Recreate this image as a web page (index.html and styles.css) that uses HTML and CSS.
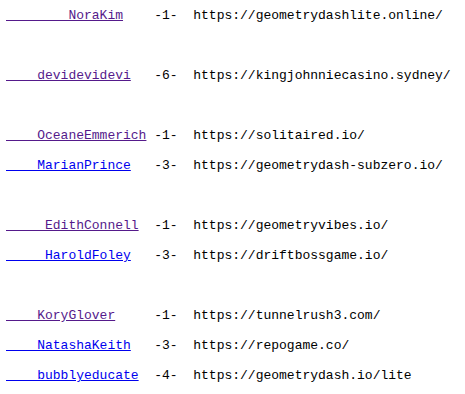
FILE: index.html
```html
<!DOCTYPE html>
<html>
<head>
<meta charset="utf-8">
<link rel="stylesheet" href="styles.css">
</head>
<body>
<div class="list">
  <div class="group">
    <div class="row"><span class="name"><a class="link visited" href="#">        NoraKim</a></span><span class="rest">-1-  https://geometrydashlite.online/</span></div>
  </div>
  <div class="group">
    <div class="row"><span class="name"><a class="link visited" href="#">    devidevidevi</a></span><span class="rest">-6-  https://kingjohnniecasino.sydney/</span></div>
  </div>
  <div class="group">
    <div class="row"><span class="name"><a class="link visited" href="#">    OceaneEmmerich</a></span><span class="rest">-1-  https://solitaired.io/</span></div>
    <div class="row"><span class="name"><a class="link" href="#">    MarianPrince</a></span><span class="rest">-3-  https://geometrydash-subzero.io/</span></div>
  </div>
  <div class="group">
    <div class="row"><span class="name"><a class="link visited" href="#">     EdithConnell</a></span><span class="rest">-1-  https://geometryvibes.io/</span></div>
    <div class="row"><span class="name"><a class="link" href="#">     HaroldFoley</a></span><span class="rest">-3-  https://driftbossgame.io/</span></div>
  </div>
  <div class="group">
    <div class="row"><span class="name"><a class="link visited" href="#">    KoryGlover</a></span><span class="rest">-1-  https://tunnelrush3.com/</span></div>
    <div class="row"><span class="name"><a class="link" href="#">    NatashaKeith</a></span><span class="rest">-3-  https://repogame.co/</span></div>
    <div class="row"><span class="name"><a class="link" href="#">    bubblyeducate</a></span><span class="rest">-4-  https://geometrydash.io/lite</span></div>
  </div>
</div>
</body>
</html>
```
FILE: styles.css
```css
html, body {
  margin: 0;
  padding: 0;
  background: #ffffff;
}
body {
  font-family: "Liberation Mono", monospace;
  font-size: 13px;
  color: #000000;
}
.list {
  display: flex;
  flex-direction: column;
  gap: 30px;
  padding-left: 6px;
  padding-top: 1px;
}
.group {
  display: flex;
  flex-direction: column;
}
.row {
  height: 30px;
  line-height: 30px;
  white-space: pre;
  display: flex;
}
.name {
  display: inline-block;
  width: 19ch;
  flex: none;
}
.link {
  color: #0000ee;
  text-decoration: underline;
  white-space: pre;
}
.link.visited {
  color: #551a8b;
}
.rest {
  white-space: pre;
}
```
